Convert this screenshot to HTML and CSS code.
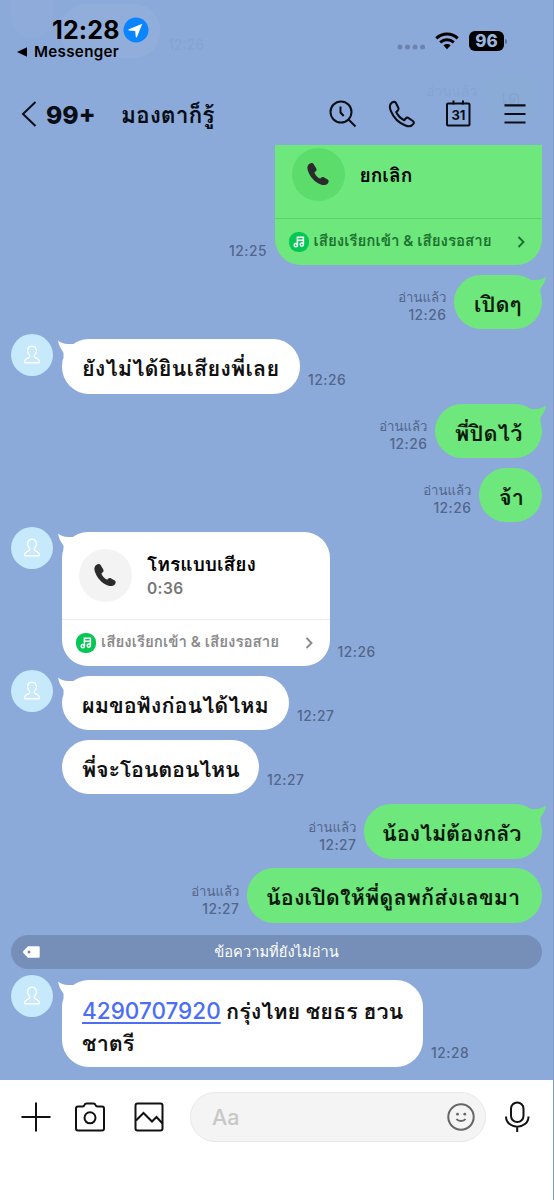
FILE: index.html
```html
<!DOCTYPE html>
<html lang="th">
<head>
<meta charset="utf-8">
<title>มองตาก็รู้</title>
<link rel="stylesheet" href="styles.css">
</head>
<body>
<svg class="defs" width="0" height="0">
  <symbol id="person" viewBox="0 0 42 42"><path d="M21 12.200c-2.700 0-4.400 1.900-4.400 4.600 0 2.200 1 3.500 1.900 4.700.7 1 .3 1.700-.7 2.100-2.500 1-4.300 2.100-4.300 4.600 0 .4.200.600.600.600h13.800c.4 0 .6-.2.6-.6 0-2.500-1.800-3.600-4.300-4.600-1-.4-1.400-1.100-.7-2.100.9-1.200 1.900-2.500 1.900-4.700 0-2.700-1.700-4.600-4.400-4.600z" fill="none" stroke="#fff" stroke-width="1.400"/></symbol>
  <symbol id="handset" viewBox="0 0 24 24"><path d="M2.300 1.100C.5 2.500-.1 4.700.8 7.500c1.900 6.600 7.200 12.400 13.700 14.900 3.200 1.200 6 .6 7.500-1.600.9-1.400.9-2.600-.4-3.500l-3.700-2.300c-1.300-.8-2.400-.5-3.300.5l-.9 1c-2.500-1.200-5-4-6-6.700l1.200-1c1.100-.9 1.300-1.900.7-3.200L7.300 1.700C6.500.1 4.500-.6 2.300 1.100z" fill="#2b2b2b"/></symbol>
  <symbol id="melody" viewBox="0 0 20 20"><rect width="20" height="20" rx="9" fill="#06c755"/><g fill="none" stroke="#fff" stroke-width="1.500"><path d="M8.400 13V5.300h6v7M8.400 8.200h6"/><circle cx="6.800" cy="13.200" r="1.600"/><circle cx="12.800" cy="12.600" r="1.600"/></g></symbol>
  <symbol id="chevron" viewBox="0 0 8 12"><path d="M1.500 1l5 5-5 5" fill="none" stroke="currentColor" stroke-width="1.900"/></symbol>
  <symbol id="tail" viewBox="0 0 18 18"><path d="M0 .5C3 3.200 7 4.400 12.500 3.900L18 4L10 17.500L5.300 16.500C5.800 14.500 5.800 13 4.800 11.500C2.500 8 .800 5 0 .5z" fill="currentColor"/></symbol>
</svg>
<div class="phone">
  <header class="top">
    <div class="ghost ghost-in"></div>
    <div class="ghost ghost-avatar"></div>
    <div class="ghost ghost-out"></div>
    <span class="faint faint-time">12:26</span>
    <span class="faint faint-read">อ่านแล้ว</span>
    <span class="faint faint-word">เด</span>
    <div class="status">
      <div class="clock-block">
        <div class="clock"><span class="clock-time">12:28</span>
          <svg class="location" viewBox="0 0 26 26"><circle cx="13" cy="13" r="12.500" fill="#0a84ff"/><path d="M19.300 6.700L5.800 12.300c-.6.300-.5 1 .1 1.100l6.300.5.6 6c.1.700.9.800 1.200.1z" fill="#fff"/></svg>
        </div>
        <div class="back-app"><svg class="back-tri" viewBox="0 0 11 10"><path d="M0 5L10 .300v9.400z"/></svg><span>Messenger</span></div>
      </div>
      <div class="signals">
        <svg class="cell" viewBox="0 0 28 6"><g fill="#6d83ab"><circle cx="3" cy="3" r="2.500"/><circle cx="10.500" cy="3" r="2.500"/><circle cx="18" cy="3" r="2.500"/><circle cx="25.500" cy="3" r="2.500"/></g></svg>
        <svg class="wifi" viewBox="0 0 24 18"><g fill="none" stroke="#000" stroke-width="3"><path d="M1.300 6.300C7.400.7 16.600.7 22.700 6.300"/><path d="M5.200 10.400c4-3.400 9.600-3.400 13.600 0"/></g><path d="M8.300 13.300c2.200-1.900 5.200-1.900 7.400 0L12 17.300z"/></svg>
        <span class="battery">96</span><i class="battery-tip"></i>
      </div>
    </div>
    <nav class="bar">
      <svg class="back" viewBox="0 0 16 26"><path d="M14.500 1L2 13l12.500 12" fill="none" stroke="#080d16" stroke-width="2"/></svg>
      <span class="count">99+</span>
      <span class="title">มองตาก็รู้</span>
      <div class="tools">
        <svg width="28" height="28" viewBox="0 0 28 28"><g fill="none" stroke="#080d16" stroke-width="2"><circle cx="12" cy="12" r="10.500"/><path d="M19.500 19.500L26.500 26.500"/><path d="M11.500 6.500v6L14.700 16"/></g></svg>
        <svg width="28" height="28" viewBox="0 0 28 28"><path d="M4.200 2.400C1.500 4.200 1.400 7.400 2.700 10.600 5.400 17.400 11 23 17.500 25.500c3.200 1.300 6.200.8 7.800-1.500.8-1.100.7-2.200-.4-3l-4.300-2.900c-1-.7-2.100-.5-2.900.4l-1.500 1.700c-3.200-1.600-6.500-5-8-8.200l1.700-1.500c.9-.8 1-1.700.4-2.800L8 3.100C7.200 1.700 5.700 1.500 4.200 2.400z" fill="none" stroke="#080d16" stroke-width="2.100" stroke-linejoin="round"/></svg>
        <svg width="26" height="28" viewBox="1.500 0 26 28"><g fill="none" stroke="#080d16" stroke-width="2"><rect x="1.500" y="3.500" width="22.500" height="22" rx="1"/><path d="M8 .5v4M17.500 .5v4"/></g><text class="cal-day" x="12.800" y="19.500" text-anchor="middle">31</text></svg>
        <svg width="22" height="20" viewBox="0 0 22 20"><path d="M.5 1.400h21M.5 10h21M.5 18.500h21" stroke="#080d16" stroke-width="2.200"/></svg>
      </div>
    </nav>
  </header>

  <main class="chat">
    <div class="row out">
      <div class="meta"><span>12:25</span></div>
      <div class="card green clipped">
        <div class="call"><span class="disc"><svg class="handset"><use href="#handset"/></svg></span><div class="call-text"><b>ยกเลิก</b></div></div>
        <div class="ring"><svg class="melody"><use href="#melody"/></svg><span>เสียงเรียกเข้า &amp; เสียงรอสาย</span><svg class="chevron"><use href="#chevron"/></svg></div>
      </div>
    </div>
    <div class="row out">
      <div class="meta"><em>อ่านแล้ว</em><span>12:26</span></div>
      <div class="bubble green b-open"><svg class="tail"><use href="#tail"/></svg><p>เปิดๆ</p></div>
    </div>
    <div class="row in">
      <div class="avatar"><svg><use href="#person"/></svg></div>
      <div class="bubble white b-hear"><svg class="tail"><use href="#tail"/></svg><p>ยังไม่ได้ยินเสียงพี่เลย</p></div>
      <div class="meta"><span>12:26</span></div>
    </div>
    <div class="row out">
      <div class="meta"><em>อ่านแล้ว</em><span>12:26</span></div>
      <div class="bubble green b-closed"><svg class="tail"><use href="#tail"/></svg><p>พี่ปิดไว้</p></div>
    </div>
    <div class="row out next">
      <div class="meta"><em>อ่านแล้ว</em><span>12:26</span></div>
      <div class="bubble green b-yes"><p>จ้า</p></div>
    </div>
    <div class="row in">
      <div class="avatar"><svg><use href="#person"/></svg></div>
      <div class="card white"><svg class="tail"><use href="#tail"/></svg>
        <div class="call"><span class="disc"><svg class="handset"><use href="#handset"/></svg></span><div class="call-text"><b>โทรแบบเสียง</b><small>0:36</small></div></div>
        <div class="ring"><svg class="melody"><use href="#melody"/></svg><span>เสียงเรียกเข้า &amp; เสียงรอสาย</span><svg class="chevron"><use href="#chevron"/></svg></div>
      </div>
      <div class="meta"><span>12:26</span></div>
    </div>
    <div class="row in">
      <div class="avatar"><svg><use href="#person"/></svg></div>
      <div class="bubble white b-listen"><svg class="tail"><use href="#tail"/></svg><p>ผมขอฟังก่อนได้ไหม</p></div>
      <div class="meta"><span>12:27</span></div>
    </div>
    <div class="row in next">
      <div class="avatar blank"></div>
      <div class="bubble white b-when"><p>พี่จะโอนตอนไหน</p></div>
      <div class="meta"><span>12:27</span></div>
    </div>
    <div class="row out">
      <div class="meta"><em>อ่านแล้ว</em><span>12:27</span></div>
      <div class="bubble green b-fear"><svg class="tail"><use href="#tail"/></svg><p>น้องไม่ต้องกลัว</p></div>
    </div>
    <div class="row out next">
      <div class="meta"><em>อ่านแล้ว</em><span>12:27</span></div>
      <div class="bubble green b-send"><p>น้องเปิดให้พี่ดูลพก้ส่งเลขมา</p></div>
    </div>
    <div class="unread"><svg viewBox="0 0 17 12"><path d="M5 .3h10.500c.8 0 1.200.4 1.200 1.200v9c0 .8-.4 1.200-1.200 1.200H5L.4 7c-.5-.6-.5-1.400 0-2z" fill="#fff"/><circle cx="6" cy="6" r="1.500" fill="#7289b0"/></svg><span>ข้อความที่ยังไม่อ่าน</span></div>
    <div class="row in last">
      <div class="avatar"><svg><use href="#person"/></svg></div>
      <div class="bubble white b-bank"><svg class="tail"><use href="#tail"/></svg><p><a>4290707920</a> กรุ่งไทย ชยธร ฮวน<br>ชาตรี</p></div>
      <div class="meta"><span>12:28</span></div>
    </div>
  </main>

  <footer class="composer">
    <svg class="c-plus" viewBox="0 0 30 30"><path d="M15 .5v29M.5 15h29" stroke="#111" stroke-width="2"/></svg>
    <svg class="c-camera" viewBox="0 0 30 30"><g fill="none" stroke="#111" stroke-width="2"><path d="M3 4.500h4.500q1.500 0 2-1.500t2-1.500h7q1.500 0 2 1.500t2 1.500H27q2 0 2 2V26.500q0 2-2 2H3q-2 0-2-2V6.500q0-2 2-2z"/><circle cx="15" cy="15.800" r="5.500"/></g></svg>
    <svg class="c-photo" viewBox="0 0 30 30"><g fill="none" stroke="#111" stroke-width="2"><rect x="1.500" y="1.500" width="27" height="27" rx="2"/><path d="M2 18.500l7.500-7.500 8.500 8.500 4.500-4.500 6 6.500"/></g></svg>
    <div class="field"><span>Aa</span><svg viewBox="0 0 28 28"><g fill="none" stroke="#666" stroke-width="2"><circle cx="14" cy="14" r="12.700"/><path d="M9.500 16c2 2.700 7 2.700 9 0"/></g><circle cx="10.500" cy="11.200" r="1.400" fill="#666"/><circle cx="17.800" cy="11.200" r="1.400" fill="#666"/></svg></div>
    <svg class="c-mic" viewBox="0 0 24 32"><g fill="none" stroke="#111" stroke-width="2"><rect x="6" y="1.500" width="12.500" height="19.500" rx="6.250"/><path d="M1 15.500C1 29 23.500 29 23.500 15.500M12.200 25.500V31"/></g></svg>
  </footer>
</div>
</body>
</html>
```

FILE: styles.css
```css
* { box-sizing: border-box; }
body { margin: 0; font-family: Inter, Thonburi, Loma, "Noto Sans Thai Looped", "Noto Sans Thai", "Noto Sans", sans-serif; color: #111; }
.defs { position: absolute; }
.phone { position: relative; width: 554px; height: 1200px; overflow: hidden; display: flex; flex-direction: column; background: #8caad9; border-right: 1px solid #7f9ac6; }
svg { display: block; flex: none; overflow: visible; }

.top { position: relative; height: 145px; flex: none; }
.ghost { position: absolute; background: #fff; opacity: .05; }
.ghost-in { left: 60px; top: 4px; width: 100px; height: 54px; border-radius: 26px; }
.ghost-avatar { left: 11px; top: 0; width: 42px; height: 38px; border-radius: 0 0 21px 21px; opacity: .02; }
.ghost-out { left: 482px; top: 70px; width: 60px; height: 55px; border-radius: 26px; background: #6ee87c; opacity: .03; }
.faint { position: absolute; color: #52658a; opacity: .09; font-size: 14px; font-weight: 500; }
.faint-time { left: 168px; top: 36px; }
.faint-read { left: 426px; top: 80px; }
.faint-word { left: 501px; top: 82px; font-size: 20px; }
.status { position: relative; display: flex; justify-content: space-between; height: 85px; padding: 17px 46px 0 17px; }
.clock { display: flex; align-items: center; height: 26px; padding-left: 35px; gap: 3px; }
.clock-time { width: 68px; font-size: 25px; font-weight: 700; line-height: 25px; letter-spacing: .15px; color: #000; white-space: nowrap; }
.location { width: 26px; height: 26px; }
.back-app { display: flex; align-items: center; height: 18px; gap: 6px; font-size: 15.200px; font-weight: 600; line-height: 16px; letter-spacing: .3px; color: #000; }
.back-tri { width: 11px; height: 10px; }
.signals { display: flex; height: 48px; align-items: center; }
.cell { width: 28px; height: 6px; margin: 12px 10px 0 0; }
.wifi { width: 24px; height: 18px; margin-right: 10px; }
.battery { width: 35px; height: 20px; border-radius: 6px; background: #000; color: #9bb5df; font-size: 17px; font-weight: 800; line-height: 20px; text-align: center; }
.battery-tip { width: 2px; height: 5px; margin-left: 1px; border-radius: 0 2px 2px 0; background: #5d719a; }
.bar { position: relative; display: flex; align-items: center; height: 58px; padding: 0 27px 0 21px; color: #080d16; }
.back { width: 16px; height: 26px; }
.count { width: 49px; margin: 2px 0 0 9px; font-size: 24.700px; font-weight: 800; }
.title { margin: 1px 0 0 26px; font-size: 22.800px; font-weight: 600; white-space: nowrap; }
.tools { display: flex; align-items: center; margin-left: auto; gap: 31px; }
.cal-day { font: 700 13px Inter, sans-serif; letter-spacing: -.3px; fill: #080d16; }

.chat { height: 935px; flex: none; overflow: hidden; }
.row { display: flex; align-items: flex-end; margin-top: 10px; }
.row:first-child { margin-top: 0; }
.row.next { margin-top: 9.500px; }
.out { justify-content: flex-end; padding-right: 11px; }
.in { padding-left: 11px; }
.avatar { align-self: flex-start; flex: none; width: 42px; height: 42px; margin: -5.500px 9px 0 0; border-radius: 50%; background: #c6e9fb; }
.avatar svg { width: 42px; height: 42px; }
.blank { visibility: hidden; }
.meta { display: flex; flex-direction: column; padding-bottom: 5px; margin: 0 8px; color: #52658a; font-size: 13.800px; font-weight: 500; line-height: 18px; letter-spacing: .5px; white-space: nowrap; }
.out .meta { align-items: flex-end; margin-right: 7.500px; }
.meta em { font-style: normal; font-size: 13.200px; letter-spacing: 0; }
.bubble { position: relative; flex: none; height: 54.500px; border-radius: 27px; padding: 0 20px; }
.bubble p { position: relative; margin: 0; font-size: 21.600px; font-weight: 600; line-height: 59px; white-space: nowrap; }
.green { background: #6ee87c; color: #091a0d; }
.white { background: #fff; color: #111; }
.tail { position: absolute; top: 1px; left: -4px; width: 18px; height: 18px; color: #fff; }
.green .tail { left: auto; right: -4px; color: #6ee87c; transform: scaleX(-1); }
.b-open { width: 88px; letter-spacing: .2px; }
.b-hear { width: 238px; letter-spacing: .2px; }
.b-closed { width: 107px; letter-spacing: .3px; }
.b-yes { width: 63px; }
.b-listen { width: 227px; }
.b-when { width: 197px; letter-spacing: -.25px; }
.b-fear { width: 178px; padding-left: 18px; letter-spacing: -.1px; }
.b-send { width: 295px; padding-left: 19px; letter-spacing: .1px; }
.b-bank { width: 361px; height: 86.500px; }
.bubble.b-bank p { padding-top: 15px; line-height: 31.500px; }
.b-bank a { color: #4c6ef5; text-decoration: underline; text-underline-offset: 3px; font-size: 22.500px; font-weight: 500; }
.card { position: relative; width: 267.500px; height: 133.500px; border-radius: 26px; }
.clipped { height: 119.500px; border-radius: 0 0 26px 26px; }
.call { display: flex; align-items: center; height: 88px; padding: 0 0 1px 17px; border-bottom: 1px solid #ececec; }
.clipped .call { height: 74px; padding-bottom: 15px; border-color: #5bd36b; }
.disc { display: grid; place-items: center; width: 53px; height: 53px; border-radius: 50%; background: #f3f3f3; }
.green .disc { background: #5bdc6b; }
.handset { width: 23px; height: 23px; }
.call-text { display: flex; flex-direction: column; margin: 2px 0 0 15px; white-space: nowrap; }
.call-text b { font-size: 19.200px; font-weight: 650; line-height: 26px; color: #000; }
.call-text small { font-size: 15.500px; font-weight: 600; line-height: 24px; letter-spacing: .4px; color: #777; }
.ring { display: flex; align-items: center; height: 46px; padding: 0 17px 0 14px; color: #8a8a8a; font-size: 15.150px; font-weight: 600; white-space: nowrap; }
.green .ring { color: #1d7130; }
.ring span { margin-top: -2px; }
.melody { width: 20px; height: 20px; margin-right: 5px; }
.chevron { width: 8px; height: 12px; margin-left: auto; }
.unread { position: relative; display: flex; align-items: center; justify-content: center; height: 34px; margin: 12px 11px 11.500px; border-radius: 17px; background: #768fb8; color: #fff; font-size: 14.700px; font-weight: 500; }
.unread svg { position: absolute; left: 12px; width: 17px; height: 12px; }
.row.last { margin-top: 0; }

.composer { display: flex; align-items: flex-start; height: 120px; flex: none; padding: 12px 0 0 21px; background: #fff; }
.c-plus, .c-camera, .c-photo { width: 30px; height: 30px; margin-top: 10px; }
.c-camera { margin-left: 24px; }
.c-photo { margin-left: 29px; }
.field { display: flex; align-items: center; justify-content: space-between; width: 296px; height: 50px; margin-left: 26px; padding: 0 10px 0 21px; border: 1px solid #e8e8e8; border-radius: 25px; background: #f4f4f4; color: #c8c8c8; font-size: 21.500px; font-weight: 500; }
.field svg { width: 28px; height: 28px; }
.c-mic { width: 24px; height: 32px; margin: 9px 0 0 19px; }
```
